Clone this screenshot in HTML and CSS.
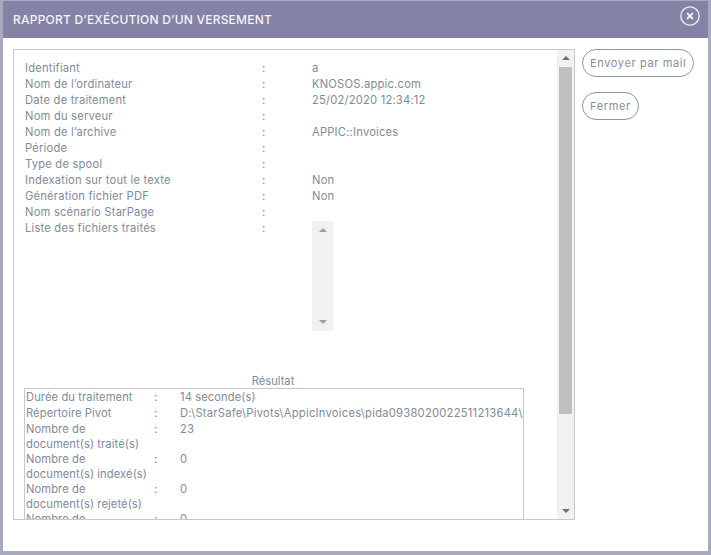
FILE: index.html
```html
<!DOCTYPE html>
<html lang="fr">
<head>
<meta charset="utf-8">
<title>Rapport</title>
<link rel="stylesheet" href="styles.css">
</head>
<body>
<div class="modal">
  <header class="head">
    <h1 class="title">RAPPORT D’EXÉCUTION D’UN VERSEMENT</h1>
    <span class="close"><svg width="20" height="20" viewBox="0 0 20 20"><circle cx="10" cy="10" r="9.2" fill="none" stroke="#eeeef4" stroke-width="1.3"/><path d="M7.6 7.6l4.8 4.8M12.4 7.6l-4.8 4.8" stroke="#f5f5f8" stroke-width="1.9" stroke-linecap="round"/></svg></span>
  </header>
  <div class="content">
    <section class="frame">
      <div class="scroll">
        <div class="info">
          <div class="row"><span class="lab">Identifiant</span><span class="sep">:</span><span>a</span></div>
          <div class="row"><span class="lab">Nom de l’ordinateur</span><span class="sep">:</span><span>KNOSOS.appic.com</span></div>
          <div class="row"><span class="lab">Date de traitement</span><span class="sep">:</span><span>25/02/2020 12:34:12</span></div>
          <div class="row"><span class="lab">Nom du serveur</span><span class="sep">:</span><span></span></div>
          <div class="row"><span class="lab">Nom de l’archive</span><span class="sep">:</span><span>APPIC::Invoices</span></div>
          <div class="row"><span class="lab">Période</span><span class="sep">:</span><span></span></div>
          <div class="row"><span class="lab">Type de spool</span><span class="sep">:</span><span></span></div>
          <div class="row"><span class="lab">Indexation sur tout le texte</span><span class="sep">:</span><span>Non</span></div>
          <div class="row"><span class="lab">Génération fichier PDF</span><span class="sep">:</span><span>Non</span></div>
          <div class="row"><span class="lab">Nom scénario StarPage</span><span class="sep">:</span><span></span></div>
          <div class="row"><span class="lab">Liste des fichiers traités</span><span class="sep">:</span>
            <div class="list"><i class="up small"></i><i class="down small"></i></div></div>
        </div>
        <div class="res-title">Résultat</div>
        <div class="results">
          <div class="rrow"><span>Durée du traitement</span><span>:</span><span>14 seconde(s)</span></div>
          <div class="rrow"><span>Répertoire Pivot</span><span>:</span><span class="path">D:\StarSafe\Pivots\AppicInvoices\pida0938020022511213644\</span></div>
          <div class="rrow"><span>Nombre de<br>document(s) traité(s)</span><span>:</span><span>23</span></div>
          <div class="rrow"><span>Nombre de<br>document(s) indexé(s)</span><span>:</span><span>0</span></div>
          <div class="rrow"><span>Nombre de<br>document(s) rejeté(s)</span><span>:</span><span>0</span></div>
          <div class="rrow"><span>Nombre de</span><span>:</span><span>0</span></div>
        </div>
      </div>
      <div class="bar"><i class="up"></i><div class="thumb"></div><i class="down"></i></div>
    </section>
    <aside class="actions">
      <button class="btn">Envoyer par mail</button>
      <button class="btn">Fermer</button>
    </aside>
  </div>
</div>
</body>
</html>
```
FILE: styles.css
```css
* { box-sizing: border-box; }
html, body { margin: 0; height: 100%; }
body { width: 711px; height: 555px; overflow: hidden; background: #a9a8c1; padding: 1px 3px 4px 3px; font-family: Inter, "DejaVu Sans", sans-serif; color: #808b9b; }
.modal { height: 100%; background: #fff; display: flex; flex-direction: column; }
.head { height: 37px; background: #8583a5; display: flex; align-items: center; padding: 0 0 0 10px; position: relative; }
.title { margin: 0; font-size: 12px; font-weight: 500; color: #f4f4f8; letter-spacing: .22px; white-space: nowrap; }
.close { position: absolute; right: 8px; top: 5px; width: 20px; height: 20px; display: block; }
.close svg { display: block; }
.content { flex: 1; display: flex; padding: 11px 0 0 10px; align-items: flex-start; }
.frame { width: 562px; height: 471px; border: 1px solid #c8c8c8; display: flex; overflow: hidden; background: #fff; }
.scroll { flex: 1; min-width: 0; padding: 10px 0 0 10px; overflow: hidden; font-size: 11.2px; line-height: 16px; }
.info { padding-left: 1px; letter-spacing: .2px; }
.row { display: grid; grid-template-columns: 237px 50px 1fr; }
.lab { white-space: nowrap; }
.list { width: 21px; height: 110px; background: #f1f1f3; margin-top: 1px; position: relative; grid-column: 3; }
.res-title { margin: 42px 0 0 0; width: 498px; text-align: center; height: 16px; }
.results { width: 500px; height: 134px; margin-top: -1px; border: 1px solid #c8c8c8; border-bottom: 0; padding: 1px 0 0 1px; overflow: hidden; line-height: 15px; letter-spacing: .08px; }
.rrow { display: grid; grid-template-columns: 128px 26px 1fr; min-height: 16px; }
.rrow span:last-child { white-space: nowrap; }
.results .path { letter-spacing: .25px; }
.bar { width: 17px; background: #f1f1f1; position: relative; flex: none; }
.thumb { position: absolute; left: 2px; right: 2px; top: 17px; height: 347px; background: #bfbfbf; }
.up, .down { position: absolute; left: 50%; margin-left: -4px; width: 0; height: 0; border-left: 4px solid transparent; border-right: 4px solid transparent; }
.up { top: 6px; border-bottom: 4px solid #6f6f6f; }
.down { bottom: 6px; border-top: 4px solid #6f6f6f; }
.up.small { border-bottom-color: #a0a0a0; top: 7px; }
.down.small { border-top-color: #a0a0a0; bottom: 7px; }
.actions { margin-left: 7px; display: flex; flex-direction: column; align-items: flex-start; gap: 15px; }
.btn { height: 28px; padding: 0 7px; background: #fff; border: 1px solid #8f96a3; border-radius: 14px; color: #858d9b; font: 11px Inter, "DejaVu Sans", sans-serif; letter-spacing: .63px; white-space: nowrap; }
```
